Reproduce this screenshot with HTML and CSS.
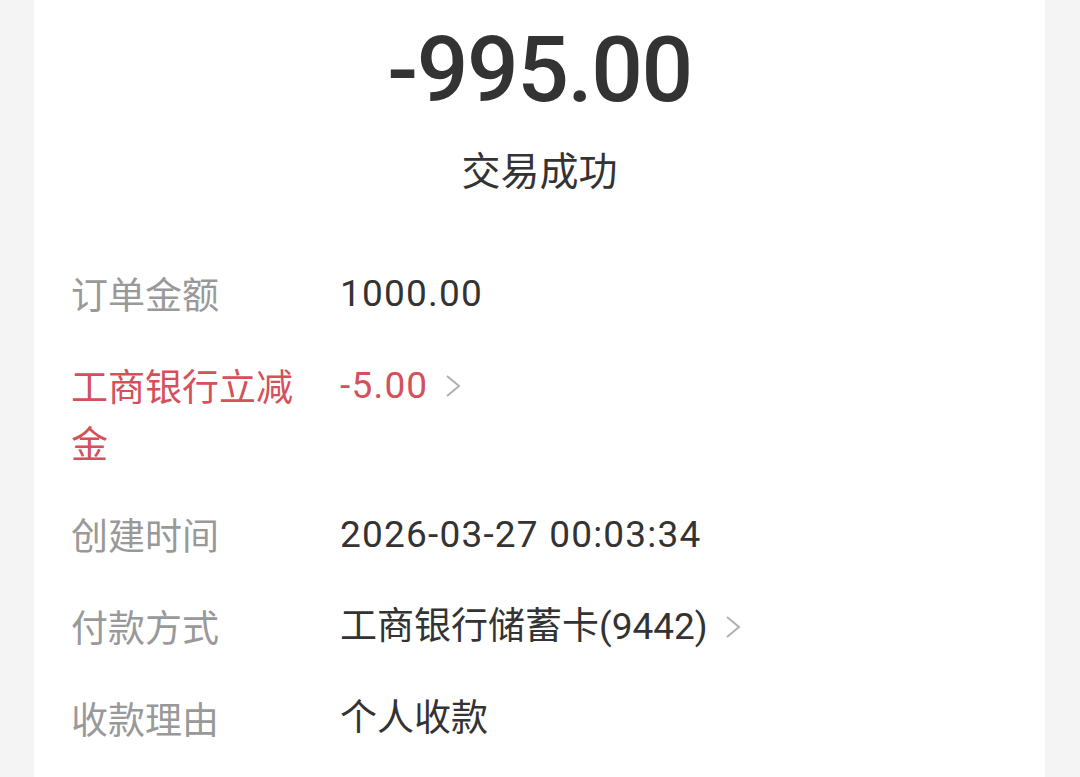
FILE: index.html
```html
<!DOCTYPE html>
<html lang="zh-CN">
<head>
  <meta charset="UTF-8" />
  <meta name="viewport" content="width=device-width, initial-scale=1.0"/>
  <title>交易详情</title>
  <link rel="stylesheet" href="styles.css">
</head>
<body>

<div class="card">
  <div class="amount">-995.00</div>
  <div class="status">交易成功</div>

  <div class="details">
    <div class="label">订单金额</div>
    <div class="value"><span class="num">1000.00</span></div>

    <div class="label red">工商银行立减金</div>
    <div class="value red"><span class="num">-5.00</span> <svg class="arrow" viewBox="0 0 16 22"><polyline points="2,1 14,11 2,21"/></svg></div>

    <div class="label">创建时间</div>
    <div class="value"><span class="num">2026-03-27 00:03:34</span></div>

    <div class="label">付款方式</div>
    <div class="value">工商银行储蓄卡(9442) <svg class="arrow" viewBox="0 0 16 22"><polyline points="2,1 14,11 2,21"/></svg></div>

    <div class="label">收款理由</div>
    <div class="value">个人收款</div>
  </div>
</div>

</body>
</html>
```

FILE: styles.css
```css
body { margin: 0; background: #f4f4f4; font-family: Roboto, "Noto Sans CJK SC", sans-serif; color: #333; }
.card { margin: 0 35px 0 34px; background: #fff; min-height: 777px; padding: 20px 37px 0; box-sizing: border-box; }
.amount { text-align: center; font-size: 91px; font-weight: 500; letter-spacing: -1.5px; line-height: 100px; color: #333; }
.status { text-align: center; font-size: 39px; line-height: 57px; margin-top: 20px; font-family: "Noto Sans CJK SC", sans-serif; }
/* detail rows */
.details { display: grid; grid-template-columns: 240px 1fr; column-gap: 29px; row-gap: 35px; margin-top: 68px; font-size: 37px; line-height: 57px; align-items: start; }
.label { color: #999; font-family: "Noto Sans CJK SC", sans-serif; }
.value { color: #333; display: flex; align-items: center; gap: 17px; height: 57px; }
.num { letter-spacing: 1.2px; }
.red { color: #d4505a; }
.arrow { width: 16px; height: 22px; fill: none; stroke: #b0b0b0; stroke-width: 2; }
```
